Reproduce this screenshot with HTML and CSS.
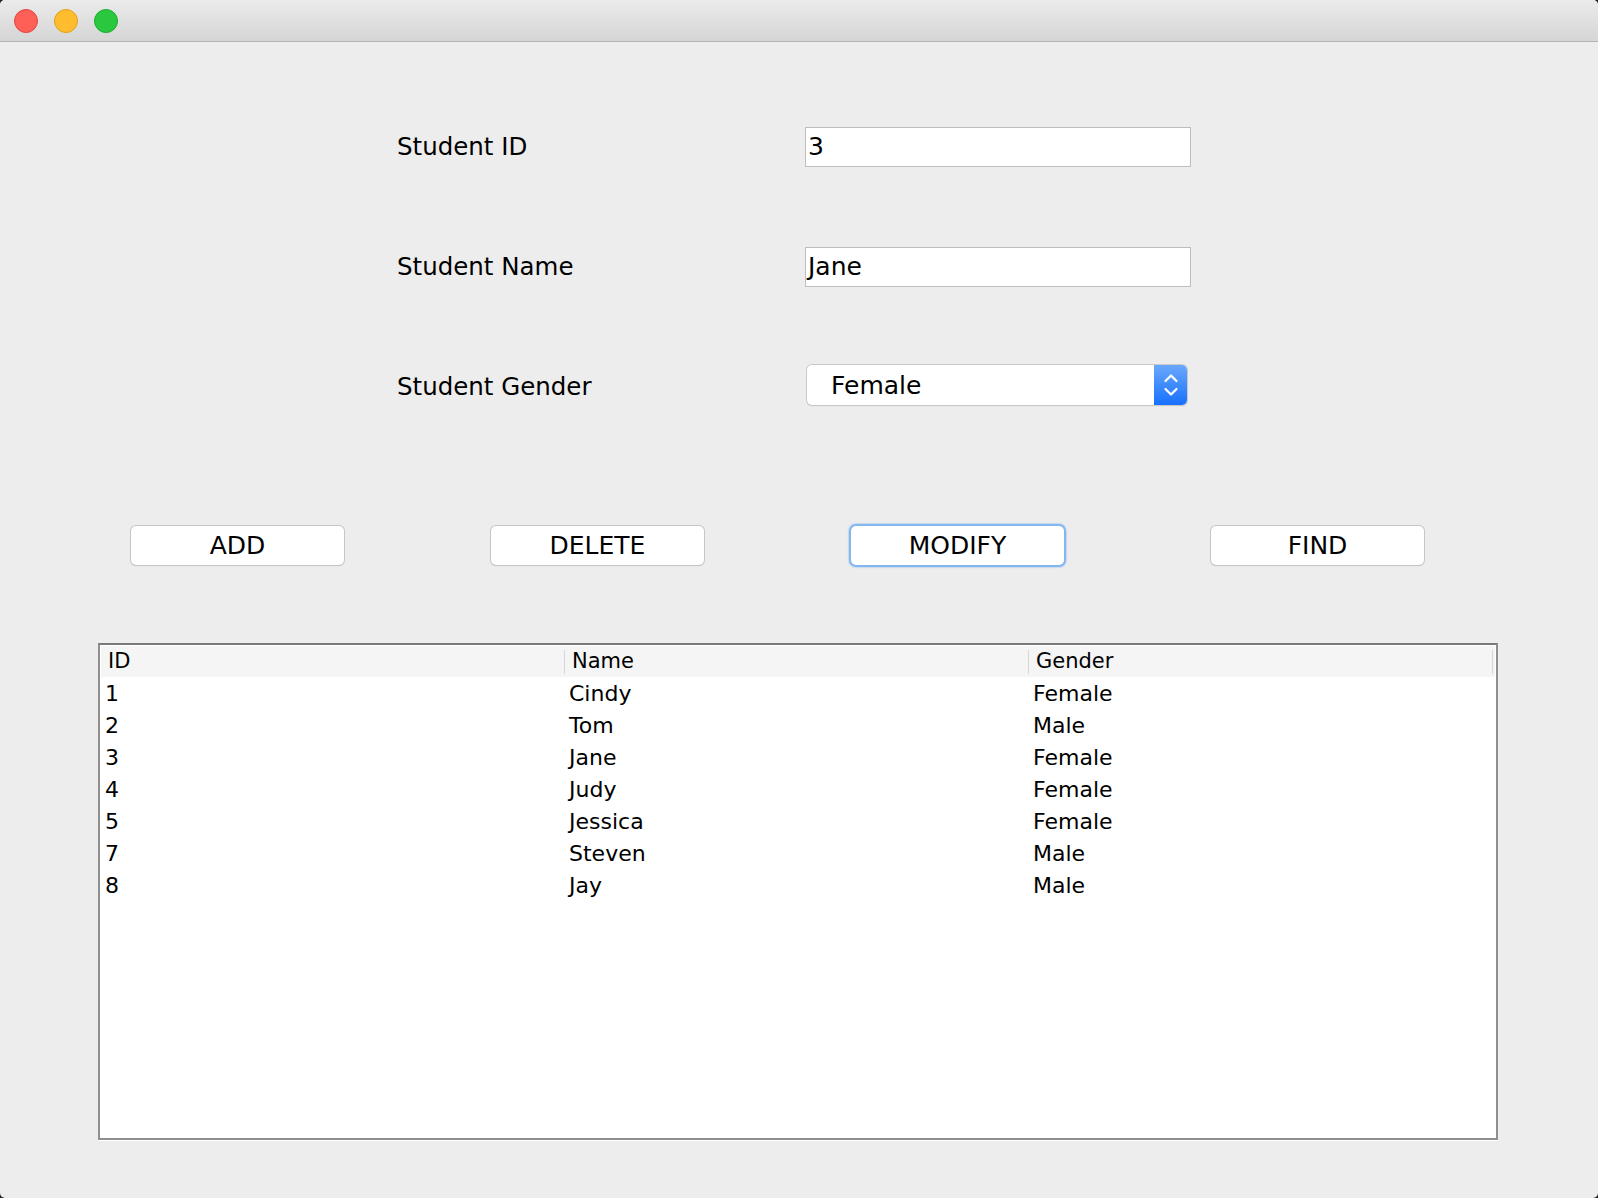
FILE: index.html
```html
<!DOCTYPE html>
<html>
<head>
<meta charset="utf-8">
<link rel="stylesheet" href="styles.css">
</head>
<body>
<div class="window">
  <div class="titlebar">
    <span class="light red"></span>
    <span class="light yellow"></span>
    <span class="light green"></span>
  </div>
  <div class="content">
    <div class="form">
      <div class="label">Student ID</div>
      <div class="field">3</div>
      <div class="label">Student Name</div>
      <div class="field">Jane</div>
      <div class="label">Student Gender</div>
      <div class="select">
        <span class="select-text">Female</span>
        <span class="select-arrows">
          <svg width="18" height="32" viewBox="0 0 18 32">
            <path d="M3.5 12 L9 6.5 L14.5 12" fill="none" stroke="#fff" stroke-width="2.2" stroke-linecap="round" stroke-linejoin="round"/>
            <path d="M3.5 20 L9 25.5 L14.5 20" fill="none" stroke="#fff" stroke-width="2.2" stroke-linecap="round" stroke-linejoin="round"/>
          </svg>
        </span>
      </div>
    </div>
    <div class="buttons">
      <div class="btn">ADD</div>
      <div class="btn">DELETE</div>
      <div class="btn focused">MODIFY</div>
      <div class="btn">FIND</div>
    </div>
    <div class="table">
      <div class="thead">
        <div class="th">ID</div>
        <div class="th">Name</div>
        <div class="th">Gender</div>
      </div>
      <div class="tr"><div class="td">1</div><div class="td">Cindy</div><div class="td">Female</div></div>
      <div class="tr"><div class="td">2</div><div class="td">Tom</div><div class="td">Male</div></div>
      <div class="tr"><div class="td">3</div><div class="td">Jane</div><div class="td">Female</div></div>
      <div class="tr"><div class="td">4</div><div class="td">Judy</div><div class="td">Female</div></div>
      <div class="tr"><div class="td">5</div><div class="td">Jessica</div><div class="td">Female</div></div>
      <div class="tr"><div class="td">7</div><div class="td">Steven</div><div class="td">Male</div></div>
      <div class="tr"><div class="td">8</div><div class="td">Jay</div><div class="td">Male</div></div>
    </div>
  </div>
</div>
</body>
</html>
```
FILE: styles.css
```css
html, body {
  margin: 0;
  padding: 0;
  background: #1e1e1e;
}
body {
  font-family: "DejaVu Sans", "Liberation Sans", sans-serif;
  color: #000;
}
.window {
  width: 1598px;
  height: 1198px;
  background: #ededed;
  border-radius: 5px;
  overflow: hidden;
}
.titlebar {
  height: 41px;
  background: linear-gradient(#ebebeb, #d5d5d5);
  border-bottom: 1px solid #b4b4b4;
  display: flex;
  align-items: center;
  gap: 16px;
  padding-left: 14px;
  box-sizing: content-box;
}
.light {
  width: 22px;
  height: 22px;
  border-radius: 50%;
  border: 1px solid;
}
.red { background: #fe5f57; border-color: #e2463f; }
.yellow { background: #febc2e; border-color: #e1a116; }
.green { background: #2ac83f; border-color: #1dab2a; }

.content {
  padding-top: 85px;
}
.form {
  display: grid;
  grid-template-columns: 408px 386px;
  grid-auto-rows: 40px;
  row-gap: 80px;
  margin-left: 397px;
  align-items: center;
}
.label {
  font-size: 24.5px;
  line-height: 40px;
}
.field {
  height: 40px;
  box-sizing: border-box;
  background: #fff;
  border: 1px solid #bdbdbd;
  font-size: 25px;
  line-height: 38px;
  padding-left: 2px;
}
.select {
  margin-left: 2px;
  width: 380px;
  height: 40px;
  margin-top: -4px;
  box-sizing: border-box;
  background: #fff;
  border-radius: 5px;
  box-shadow: 0 0 0 1px #c9c9c9, 0 1px 1px rgba(0,0,0,0.25);
  display: flex;
  align-items: center;
  overflow: hidden;
}
.select-text {
  flex: 1;
  font-size: 25px;
  padding-left: 24px;
}
.select-arrows {
  width: 33px;
  height: 40px;
  background: linear-gradient(#6aa8fc, #1670fe);
  display: flex;
  align-items: center;
  justify-content: center;
}
.buttons {
  display: flex;
  gap: 147px;
  margin-left: 131px;
  margin-top: 119px;
}
.btn {
  width: 213px;
  height: 39px;
  box-sizing: border-box;
  background: #fff;
  border-radius: 5px;
  box-shadow: 0 0 0 1px #c6c6c6, 0 1px 1px rgba(0,0,0,0.22);
  font-size: 25px;
  line-height: 39px;
  text-align: center;
}
.btn.focused {
  box-shadow: 0 0 0 2px #82b7ef, 0 0 1px 3px rgba(130,183,239,0.35);
}
.table {
  margin-top: 78px;
  margin-left: 98px;
  width: 1400px;
  height: 497px;
  box-sizing: border-box;
  border: 2px solid #8f8f8f;
  border-top-color: #7a7a7a;
  background: #fff;
  padding: 1px 1px 0 1px;
  box-shadow: 0 1px 0 #fff;
}
.thead {
  display: grid;
  grid-template-columns: 464px 464px 464px;
  height: 31px;
  background: #f5f5f5;
  align-items: center;
}
.th {
  font-size: 21px;
  height: 24px;
  line-height: 22px;
  padding-left: 7px;
  border-right: 1px solid #d6d6d6;
}
.tr {
  display: grid;
  grid-template-columns: 464px 464px 464px;
  height: 32px;
}
.td {
  font-size: 22px;
  line-height: 32px;
  padding-left: 4px;
  padding-top: 1px;
}
```
